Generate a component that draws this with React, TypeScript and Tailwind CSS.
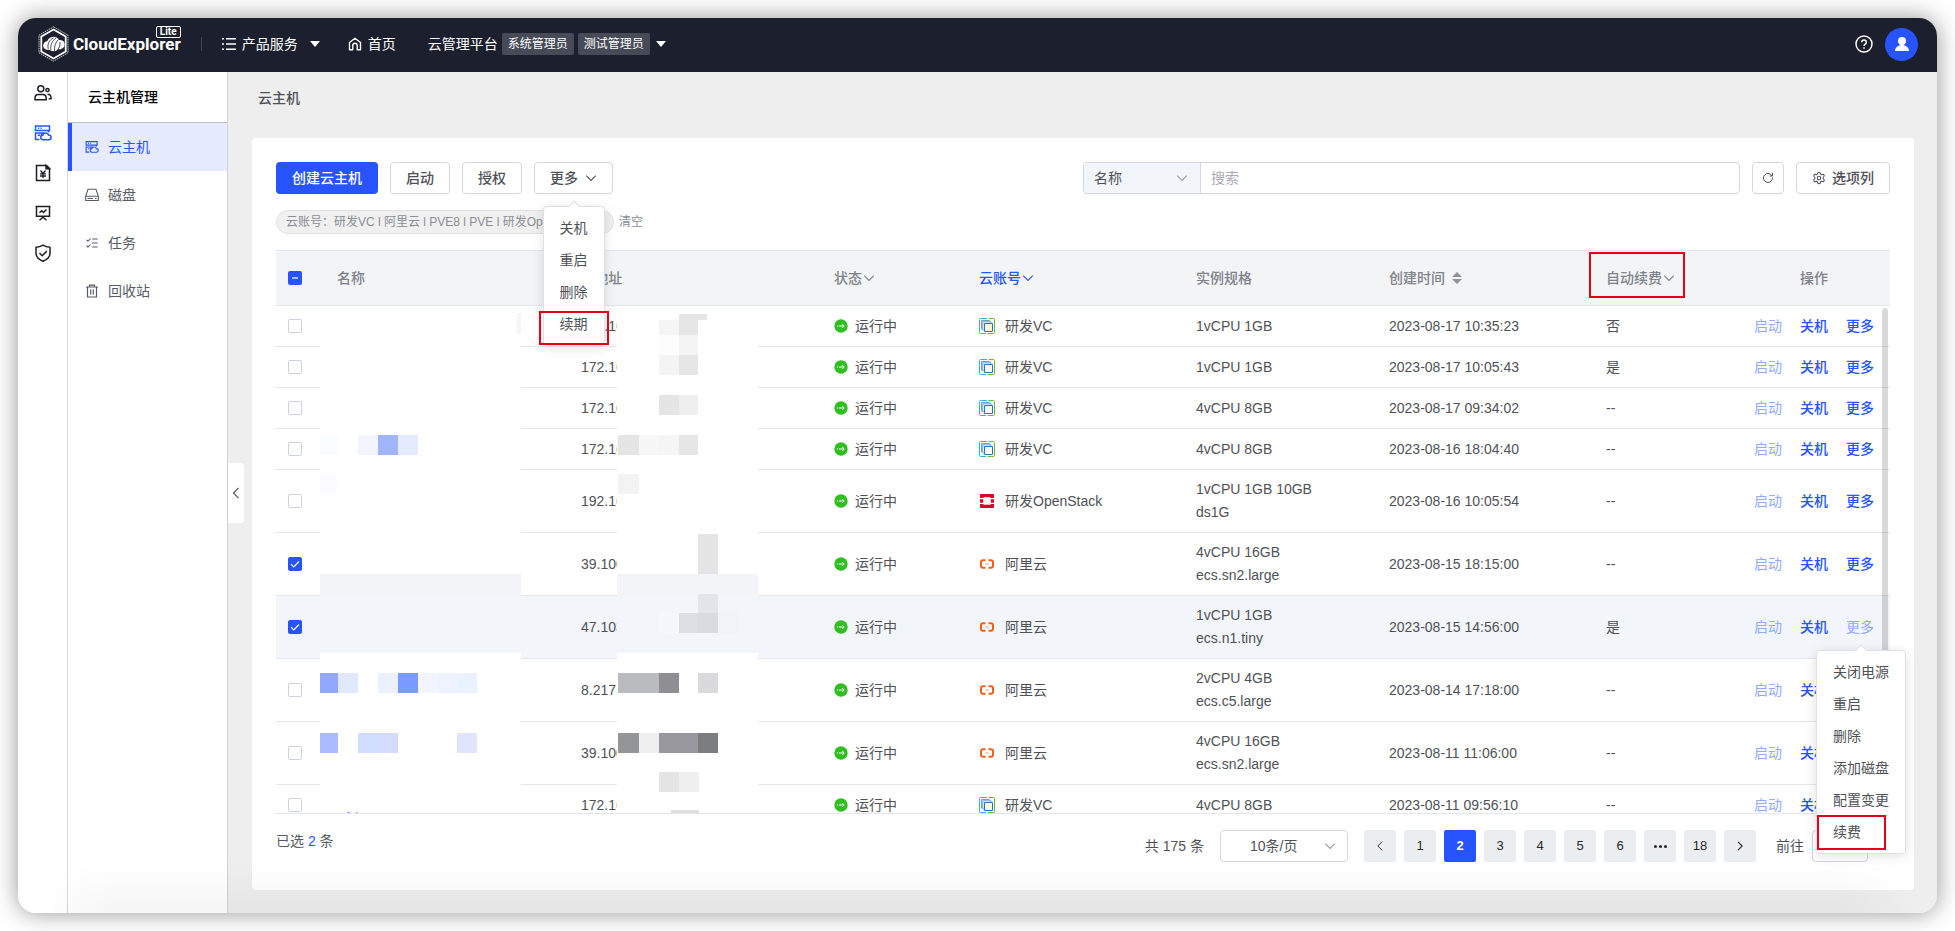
import React, { useState } from "react";
import { ListChecks, RotateCw, Settings } from "lucide-react";

type Platform = "vc" | "openstack" | "aliyun";

interface CloudServer {
  id: number;
  ip: string;
  platform: Platform;
  account: string;
  spec: string[];
  createdAt: string;
  autoRenew: string;
  hovered?: boolean;
}

interface Block {
  x: number;
  y: number;
  w: number;
  h: number;
  fill: string;
}

const servers: CloudServer[] = [
  { id: 1, ip: "172.16", platform: "vc", account: "研发VC", spec: ["1vCPU 1GB"], createdAt: "2023-08-17 10:35:23", autoRenew: "否" },
  { id: 2, ip: "172.16", platform: "vc", account: "研发VC", spec: ["1vCPU 1GB"], createdAt: "2023-08-17 10:05:43", autoRenew: "是" },
  { id: 3, ip: "172.16", platform: "vc", account: "研发VC", spec: ["4vCPU 8GB"], createdAt: "2023-08-17 09:34:02", autoRenew: "--" },
  { id: 4, ip: "172.16", platform: "vc", account: "研发VC", spec: ["4vCPU 8GB"], createdAt: "2023-08-16 18:04:40", autoRenew: "--" },
  { id: 5, ip: "192.16", platform: "openstack", account: "研发OpenStack", spec: ["1vCPU 1GB 10GB", "ds1G"], createdAt: "2023-08-16 10:05:54", autoRenew: "--" },
  { id: 6, ip: "39.100", platform: "aliyun", account: "阿里云", spec: ["4vCPU 16GB", "ecs.sn2.large"], createdAt: "2023-08-15 18:15:00", autoRenew: "--" },
  { id: 7, ip: "47.103", platform: "aliyun", account: "阿里云", spec: ["1vCPU 1GB", "ecs.n1.tiny"], createdAt: "2023-08-15 14:56:00", autoRenew: "是", hovered: true },
  { id: 8, ip: "8.217", platform: "aliyun", account: "阿里云", spec: ["2vCPU 4GB", "ecs.c5.large"], createdAt: "2023-08-14 17:18:00", autoRenew: "--" },
  { id: 9, ip: "39.100", platform: "aliyun", account: "阿里云", spec: ["4vCPU 16GB", "ecs.sn2.large"], createdAt: "2023-08-11 11:06:00", autoRenew: "--" },
  { id: 10, ip: "172.16", platform: "vc", account: "研发VC", spec: ["4vCPU 8GB"], createdAt: "2023-08-11 09:56:10", autoRenew: "--" },
];

// mosaic over the name column
const nameBlocks: Block[] = [
  { x: 0, y: 0, w: 201, h: 268, fill: "#ffffff" },
  { x: 0, y: 268, w: 201, h: 21, fill: "#f3f4f8" },
  { x: 0, y: 289, w: 201, h: 58, fill: "#f2f5fa" },
  { x: 0, y: 347, w: 201, h: 160, fill: "#ffffff" },
  { x: 197, y: 7, w: 4, h: 21, fill: "#f5f5f5" },
  { x: 0, y: 129, w: 18, h: 20, fill: "#f9fdff" },
  { x: 38, y: 129, w: 20, h: 20, fill: "#f2f5ff" },
  { x: 58, y: 129, w: 20, h: 20, fill: "#a1b4ff" },
  { x: 78, y: 129, w: 20, h: 20, fill: "#e4eaff" },
  { x: 0, y: 168, w: 18, h: 20, fill: "#fcfcff" },
  { x: 0, y: 367, w: 18, h: 20, fill: "#92a8ff" },
  { x: 18, y: 367, w: 20, h: 20, fill: "#e1e9ff" },
  { x: 58, y: 367, w: 20, h: 20, fill: "#ecf0ff" },
  { x: 78, y: 367, w: 20, h: 20, fill: "#799bff" },
  { x: 98, y: 367, w: 20, h: 20, fill: "#f2f4ff" },
  { x: 118, y: 367, w: 20, h: 20, fill: "#eef3ff" },
  { x: 138, y: 367, w: 19, h: 20, fill: "#eaf1ff" },
  { x: 0, y: 427, w: 18, h: 20, fill: "#aabcff" },
  { x: 38, y: 427, w: 20, h: 20, fill: "#d0ddff" },
  { x: 58, y: 427, w: 20, h: 20, fill: "#d3dbff" },
  { x: 137, y: 427, w: 20, h: 20, fill: "#e0e4ff" },
  { x: 27, y: 506, w: 3, h: 1, fill: "#8fb0ff" },
  { x: 36, y: 506, w: 2, h: 1, fill: "#8fb0ff" },
];

// mosaic over the tail of the address column
const ipBlocks: Block[] = [
  { x: 0, y: 0, w: 141, h: 268, fill: "#ffffff" },
  { x: 0, y: 268, w: 141, h: 21, fill: "#f3f4f8" },
  { x: 0, y: 289, w: 141, h: 58, fill: "#f2f5fa" },
  { x: 0, y: 347, w: 141, h: 160, fill: "#ffffff" },
  { x: 62, y: 8, w: 28, h: 6, fill: "#e5e5e5" },
  { x: 42, y: 14, w: 20, h: 15, fill: "#f5f5f5" },
  { x: 62, y: 14, w: 19, h: 15, fill: "#e6e6e6" },
  { x: 42, y: 29, w: 20, h: 20, fill: "#fdfdfd" },
  { x: 62, y: 29, w: 19, h: 20, fill: "#f4f4f4" },
  { x: 42, y: 49, w: 20, h: 20, fill: "#f4f4f4" },
  { x: 62, y: 49, w: 19, h: 20, fill: "#e6e6e6" },
  { x: 42, y: 89, w: 20, h: 20, fill: "#e5e5e5" },
  { x: 62, y: 89, w: 19, h: 20, fill: "#efefef" },
  { x: 1, y: 129, w: 21, h: 20, fill: "#e5e5e5" },
  { x: 22, y: 129, w: 20, h: 20, fill: "#f7f7f7" },
  { x: 42, y: 129, w: 20, h: 20, fill: "#f5f5f5" },
  { x: 62, y: 129, w: 19, h: 20, fill: "#e6e6e6" },
  { x: 1, y: 168, w: 21, h: 20, fill: "#f3f3f3" },
  { x: 81, y: 228, w: 20, h: 40, fill: "#e5e5e5" },
  { x: 81, y: 288, w: 20, h: 19, fill: "#e2e5e9" },
  { x: 42, y: 307, w: 20, h: 20, fill: "#f4f7fb" },
  { x: 62, y: 307, w: 19, h: 20, fill: "#dde0e3" },
  { x: 81, y: 307, w: 20, h: 20, fill: "#dadbe0" },
  { x: 101, y: 307, w: 20, h: 20, fill: "#f0f3f8" },
  { x: 1, y: 367, w: 41, h: 20, fill: "#babbbe" },
  { x: 42, y: 367, w: 20, h: 20, fill: "#8e8e93" },
  { x: 81, y: 367, w: 20, h: 20, fill: "#dadadc" },
  { x: 1, y: 427, w: 21, h: 20, fill: "#949597" },
  { x: 22, y: 427, w: 20, h: 20, fill: "#efefef" },
  { x: 42, y: 427, w: 39, h: 20, fill: "#9a989f" },
  { x: 81, y: 427, w: 20, h: 20, fill: "#7c7d7f" },
  { x: 42, y: 466, w: 20, h: 20, fill: "#e4e4e4" },
  { x: 62, y: 466, w: 20, h: 20, fill: "#f0f0f0" },
  { x: 54, y: 504, w: 28, h: 3, fill: "#dedede" },
];

const pages = ["1", "2", "3", "4", "5", "6", "•••", "18"];

function Mosaic({ blocks, className }: { blocks: Block[]; className: string }) {
  return (
    <svg className={className} shapeRendering="crispEdges" aria-hidden="true">
      {blocks.map((b, i) => (
        <rect key={i} x={b.x} y={b.y} width={b.w} height={b.h} fill={b.fill} />
      ))}
    </svg>
  );
}

function ChevronDown({ className = "size-3" }: { className?: string }) {
  return (
    <svg className={className} viewBox="0 0 12 12" fill="none" stroke="currentColor" strokeWidth="1.1" aria-hidden="true">
      <path d="M1.2 3.6 6 8.4l4.8-4.8" />
    </svg>
  );
}

function ChevronSide({ right, className = "size-3" }: { right?: boolean; className?: string }) {
  return (
    <svg className={className} viewBox="0 0 12 12" fill="none" stroke="currentColor" strokeWidth="1.1" aria-hidden="true">
      <path d={right ? "M4 1.8 8.2 6 4 10.2" : "M8.500 .8 3.500 6l5 5.200"} />
    </svg>
  );
}

function Caret() {
  return (
    <svg className="h-[6px] w-[10px]" viewBox="0 0 10 6" fill="currentColor" aria-hidden="true">
      <path d="M0 0h10L5 6z" />
    </svg>
  );
}

function Logo() {
  return (
    <svg className="h-[36px] w-[31px]" viewBox="0 0 31 36" fill="none" aria-hidden="true">
      <path d="M15.500.8 30 9.200v17.600l-14.500 8.400L1 26.800V9.200z" stroke="#fff" strokeWidth=".8" strokeDasharray="1.500 .8" />
      <path d="M15.500 3.500 27.700 10.500v15L15.500 32.500 3.300 25.500v-15z" stroke="#fff" strokeWidth="1.800" />
      <circle cx="9.500" cy="19.500" r="4.300" fill="#fff" />
      <circle cx="22" cy="18.500" r="4.600" fill="#fff" />
      <path d="M8 20h15v3.200H8z" fill="#fff" />
      <ellipse cx="15.500" cy="18" rx="6.800" ry="7.300" fill="#fff" />
      <path d="M10.300 22.800c-1.200-4.500.7-8.800 5.200-11M13 24.300c-1-5 1-9.500 5-12.300M16.500 24.800c-.3-4.500 1-8.500 4-11.300M19.300 24c2.200-2.200 3-5 2.600-8" stroke="#1c1f2e" strokeWidth=".8" />
    </svg>
  );
}

function ServerIcon({ className }: { className: string }) {
  return (
    <svg className={className} viewBox="0 0 18 18" fill="none" stroke="currentColor" strokeWidth="1.500" aria-hidden="true">
      <path d="M1.500 2h14v4.500h-14z" />
      <path d="M4 4.250h1.200M6.500 4.250h1.200" />
      <path d="M14.500 6.500v2M5.500 15.500h-4V9h7.500L6.800 11.500M3.800 11.200H6" />
      <path d="M9 15.700a2.200 2.200 0 0 1-.2-4.400 3 3 0 0 1 5.800-.2 2.300 2.300 0 0 1 .3 4.600z" />
    </svg>
  );
}

function UsersIcon() {
  return (
    <svg className="size-[18px]" viewBox="0 0 18 18" fill="none" stroke="currentColor" strokeWidth="1.500" aria-hidden="true">
      <circle cx="6.800" cy="4.800" r="3" />
      <path d="M1 15.700v-1.500c0-2.300 1.500-3.700 3.500-3.700h4.200c2 0 3.500 1.400 3.500 3.700v1.500z" />
      <circle cx="13.500" cy="6" r="1.600" />
      <path d="M13.500 10.300c2 0 3.500 1.300 3.500 3.200v1.300h-2.300" />
    </svg>
  );
}

function BillIcon() {
  return (
    <svg className="size-[18px]" viewBox="0 0 18 18" fill="none" stroke="currentColor" strokeWidth="1.500" aria-hidden="true">
      <path d="M2.500 1.500h10l3 3v12h-13z" />
      <path d="M12 1.500v3.300h3.500z" fill="currentColor" />
      <path d="m6.500 6.500 2.500 3 2.500-3M6 9.800h6M6 12h6M9 9.500v4.500" strokeWidth="1.300" />
    </svg>
  );
}

function BoardIcon() {
  return (
    <svg className="size-[18px]" viewBox="0 0 18 18" fill="none" stroke="currentColor" strokeWidth="1.500" aria-hidden="true">
      <path d="M1.500 2.500h15M2.500 2.500v9.800h13V2.500M9 12.300v2M5.500 16.300l3.500-3 3.500 3" />
      <path d="m5.500 8.800 2.200-2 1.800 1.700 3-3" />
    </svg>
  );
}

function ShieldIcon() {
  return (
    <svg className="size-[18px]" viewBox="0 0 18 18" fill="none" stroke="currentColor" strokeWidth="1.500" strokeLinejoin="round" aria-hidden="true">
      <path d="M9 1.200c2 1.300 4.300 2 7 2v6c0 3.600-2.800 6.300-7 8-4.200-1.700-7-4.400-7-8v-6c2.700 0 5-.7 7-2z" />
      <path d="m5.500 9 2.700 2.700 4.600-4.600" />
    </svg>
  );
}

function DiskIcon({ className }: { className: string }) {
  return (
    <svg className={className} viewBox="0 0 14 14" fill="none" stroke="currentColor" strokeWidth="1.100" aria-hidden="true">
      <path d="M3 1.300h8L13.300 8v4.500H.7V8zM.7 8.300h12.600M2.500 10.500h5.500M10 10.500h1.500" />
    </svg>
  );
}

function TrashIcon({ className }: { className: string }) {
  return (
    <svg className={className} viewBox="0 0 14 14" fill="none" stroke="currentColor" strokeWidth="1.200" aria-hidden="true">
      <path d="M1 3h12M4.500 2.800V1.200h5v1.600M2.500 3v10h9V3M5.700 5.500v5M8.300 5.500v5" />
    </svg>
  );
}

function PlatformIcon({ platform }: { platform: Platform }) {
  if (platform === "openstack") {
    return (
      <svg className="size-4" viewBox="0 0 16 16" aria-hidden="true">
        <path d="M2 1h12a1 1 0 0 1 1 1v3h-3.500V4.200h-7V5H1V2a1 1 0 0 1 1-1zM1 6.200h3.200v3.600H1zM11.800 6.200H15v3.600h-3.200zM1 11h3.500v.8h7V11H15v3a1 1 0 0 1-1 1H2a1 1 0 0 1-1-1z" fill="#cf0a2c" />
      </svg>
    );
  }
  if (platform === "aliyun") {
    return (
      <svg className="size-4" viewBox="0 0 16 16" fill="none" aria-hidden="true">
        <path d="M6.500 4.200H4A2 2 0 0 0 2 6.200v3.600a2 2 0 0 0 2 2h2.500M9.500 4.200H12a2 2 0 0 1 2 2v3.600a2 2 0 0 1-2 2H9.500" stroke="#f2601c" strokeWidth="2" />
        <path d="M6 8h4" stroke="#f9c3a9" strokeWidth="1.500" />
      </svg>
    );
  }
  return (
    <svg className="size-4" viewBox="0 0 16 16" fill="none" aria-hidden="true">
      <path d="M8 .5H1.500a1 1 0 0 0-1 1v13a1 1 0 0 0 1 1H7" stroke="#35b0d8" />
      <path d="M9.500 .5h5a1 1 0 0 1 1 1v13a1 1 0 0 1-1 1H8.500" stroke="#74b62e" />
      <path d="M10.500 3.500v-1h-8v8.500h1M12 5V3.800H3.800V12h1" stroke="#5fa3dc" />
      <path d="M5.500 5.500h8v8h-8z" stroke="#1a78c8" fill="#fff" />
    </svg>
  );
}

function Check({ checked, label, onChange }: { checked: boolean; label: string; onChange: () => void }) {
  return (
    <label className="relative block size-[14px]">
      <input
        type="checkbox"
        aria-label={label}
        checked={checked}
        onChange={onChange}
        className="block size-[14px] appearance-none rounded-xs border border-[#cfd1de] bg-white checked:border-[#2754ff] checked:bg-[#2754ff]"
      />
      {checked && (
        <svg className="pointer-events-none absolute inset-0 size-[14px]" viewBox="0 0 14 14" fill="none" stroke="#fff" strokeWidth="1.200">
          <path d="m3 7.200 2.800 2.800L11 4.500" />
        </svg>
      )}
    </label>
  );
}

function DropdownMenu({ items }: { items: string[] }) {
  return (
    <div className="relative rounded border border-[#dfe1ea] bg-white py-[5px] shadow-[0_2px_12px_rgba(0,0,0,0.12)]">
      <span className="absolute -top-[5px] left-1/2 size-2 -translate-x-1/2 rotate-45 border-t border-l border-[#dfe1ea] bg-white" />
      <ul>
        {items.map((item) => (
          <li key={item}>
            <button type="button" className="block h-8 w-full px-4 text-left text-sm whitespace-nowrap text-[#4f5157]">
              {item}
            </button>
          </li>
        ))}
      </ul>
    </div>
  );
}

const menus = [
  { label: "云主机", icon: <ServerIcon className="size-[14px]" />, active: true },
  { label: "磁盘", icon: <DiskIcon className="size-[14px]" /> },
  { label: "任务", icon: <ListChecks className="size-[14px]" strokeWidth={1.800} /> },
  { label: "回收站", icon: <TrashIcon className="size-[14px]" /> },
];

export default function App() {
  const [selected, setSelected] = useState<number[]>([6, 7]);
  const [page, setPage] = useState("2");
  const [keyword, setKeyword] = useState("");

  const toggle = (id: number) => {
    setSelected((prev) => (prev.includes(id) ? prev.filter((v) => v !== id) : [...prev, id]));
  };

  return (
    <div className="h-screen min-h-[600px] bg-white p-[18px] font-['Liberation_Sans','Noto_Sans_CJK_SC',sans-serif] text-sm text-[#4f5157]">
      <div className="relative flex h-full flex-col overflow-hidden rounded-[18px] shadow-[0_0_24px_rgba(0,0,0,0.42)]">
        <header className="flex h-[54px] shrink-0 items-center bg-[#1c1f2e] pr-[19px] pb-[2px] pl-5 text-white">
          <a href="#" className="relative flex items-center gap-1" aria-label="CloudExplorer Lite">
            <Logo />
            <span className="font-[Roboto,sans-serif] text-[17px] font-bold">CloudExplorer</span>
            <span className="absolute top-0 right-0 rounded-xs border border-white px-[3px] font-[Roboto,sans-serif] text-[10px] leading-[10px] font-bold">Lite</span>
          </a>
          <span className="mr-5 ml-5 h-[14px] w-px bg-[#42454f]" />
          <button type="button" className="flex items-center gap-[6px]">
            <svg className="size-[14px]" viewBox="0 0 14 14" fill="none" stroke="currentColor" strokeWidth="1.400" aria-hidden="true">
              <path d="M4 1.700h10M4 7h10M4 12.300h10M0 1.700h2M0 7h2M0 12.300h2" />
            </svg>
            产品服务
            <span className="ml-[6px]"><Caret /></span>
          </button>
          <a href="#" className="ml-7 flex items-center gap-[6px]">
            <svg className="size-[14px]" viewBox="0 0 14 14" fill="none" stroke="currentColor" strokeWidth="1.400" aria-hidden="true">
              <path d="M1.500 5.500 7 1.200l5.500 4.300v7.300H9.200V8.500a2.200 2.200 0 0 0-4.400 0v4.300H1.500z" strokeLinejoin="round" />
            </svg>
            首页
          </a>
          <button type="button" className="ml-8 flex items-center gap-1">
            云管理平台
            <span className="rounded-xs bg-[#474a57] px-[6px] text-xs leading-[22px]">系统管理员</span>
            <span className="rounded-xs bg-[#474a57] px-[6px] text-xs leading-[22px]">测试管理员</span>
            <span className="ml-[2px]"><Caret /></span>
          </button>
          <div className="ml-auto flex items-center gap-3">
            <button type="button" aria-label="帮助">
              <svg className="size-[18px]" viewBox="0 0 18 18" fill="none" stroke="currentColor" strokeWidth="1.500" aria-hidden="true">
                <circle cx="9" cy="9" r="8" />
                <path d="M6.700 7.200a2.300 2.300 0 1 1 3.500 2c-.8.500-1.200.900-1.200 1.800M9 12.200v1.500" />
              </svg>
            </button>
            <button type="button" aria-label="用户" className="flex size-[33px] items-center justify-center rounded-full bg-[#2754ff]">
              <svg className="size-[14px]" viewBox="0 0 14 14" fill="currentColor" aria-hidden="true">
                <circle cx="7" cy="4" r="4" />
                <path d="M5.300 6h3.400v2.200c3 .6 5.300 2.700 5.300 5.800H0c0-3.100 2.300-5.200 5.300-5.800z" />
              </svg>
            </button>
          </div>
        </header>

        <div className="flex min-h-0 flex-1">
          <nav className="flex w-[50px] shrink-0 flex-col items-center gap-[22px] border-r border-[#d5d7de] bg-white pt-3 text-[#1d1f24]">
            <a href="#" aria-label="用户管理"><UsersIcon /></a>
            <a href="#" aria-label="云主机管理" className="text-[#2754ff]"><ServerIcon className="size-[18px]" /></a>
            <a href="#" aria-label="云账单"><BillIcon /></a>
            <a href="#" aria-label="运营分析"><BoardIcon /></a>
            <a href="#" aria-label="安全合规"><ShieldIcon /></a>
          </nav>

          <aside className="w-40 shrink-0 border-r border-[#cfd2de] bg-white">
            <h2 className="flex h-[51px] items-center border-b border-[#bcbec4] pl-5 font-medium text-black">云主机管理</h2>
            {menus.map((m) => (
              <a
                key={m.label}
                href="#"
                className={`flex h-12 items-center gap-[9px] border-l-4 pl-[13px] ${
                  m.active ? "border-[#2754ff] bg-[#e6ebff] text-[#2754ff]" : "border-transparent text-[#565b66]"
                }`}
              >
                {m.icon}
                {m.label}
              </a>
            ))}
          </aside>

          <main className="relative flex min-w-0 flex-1 flex-col bg-[#eeeeee] pr-[23px] pb-[23px] pl-6">
            <button
              type="button"
              aria-label="收起菜单"
              className="absolute top-1/2 left-0 flex h-[60px] w-4 -translate-y-1/2 items-center justify-center rounded-r bg-white"
            >
              <ChevronSide />
            </button>
            <h1 className="mb-[14px] flex h-[52px] shrink-0 items-center pl-[6px] font-medium">云主机</h1>

            <section className="flex min-h-0 flex-1 flex-col rounded bg-white px-6 pt-6 pb-7">
              <div className="flex shrink-0 items-center justify-between">
                <div className="flex gap-3 font-medium">
                  <button type="button" className="h-8 rounded bg-[#2754ff] px-4 text-white">创建云主机</button>
                  <button type="button" className="h-8 rounded border border-[#d3d5e0] px-[15px]">启动</button>
                  <button type="button" className="h-8 rounded border border-[#d3d5e0] px-[15px]">授权</button>
                  <div className="relative">
                    <button type="button" className="flex h-8 items-center gap-[7px] rounded border border-[#d3d5e0] px-[15px]">
                      更多
                      <ChevronDown />
                    </button>
                    <div className="absolute top-11 left-1/2 z-20 -translate-x-1/2 font-normal">
                      <DropdownMenu items={["关机", "重启", "删除", "续期"]} />
                      <span className="pointer-events-none absolute -right-1 bottom-px -left-1 h-[34px] border-2 border-[#e60019]" />
                    </div>
                  </div>
                </div>
                <div className="flex w-1/2 gap-3">
                  <div className="flex h-8 flex-1 rounded border border-[#d3d5e0]">
                    <div className="relative w-[117px] border-r border-[#d3d5e0]">
                      <select aria-label="搜索字段" className="h-full w-full appearance-none rounded-l bg-[#f2f5fa] pl-[10px]">
                        <option>名称</option>
                      </select>
                      <ChevronDown className="pointer-events-none absolute top-[9px] right-3 size-3 text-[#9a9ca4]" />
                    </div>
                    <input
                      type="text"
                      aria-label="搜索"
                      placeholder="搜索"
                      value={keyword}
                      onChange={(e) => setKeyword(e.target.value)}
                      className="min-w-0 flex-1 rounded-r px-[10px] outline-none placeholder:text-[#a8abb2]"
                    />
                  </div>
                  <button type="button" aria-label="刷新" className="flex size-8 items-center justify-center rounded border border-[#d3d5e0]">
                    <RotateCw className="size-3" />
                  </button>
                  <button type="button" className="flex h-8 items-center gap-[6px] rounded border border-[#d3d5e0] px-[15px] font-medium">
                    <Settings className="size-[14px]" strokeWidth={1.800} />
                    选项列
                  </button>
                </div>
              </div>

              <div className="mt-4 flex h-6 shrink-0 items-center gap-[5px] text-xs text-[#8b8e95]">
                <span className="h-6 w-[338px] truncate rounded-full border border-[#e0e0e2] bg-[#f0f0f0] pl-[9px] leading-[22px]">
                  云账号：研发VC l 阿里云 l PVE8 l PVE l 研发OpenStack
                </span>
                <button type="button">清空</button>
              </div>

              <div className="relative mt-4 flex min-h-0 flex-1 flex-col">
                <div className="relative min-h-0 flex-1 overflow-hidden border-b border-[#e3e5ef]">
                  <table className="w-full table-fixed border-separate border-spacing-0 text-left">
                    <colgroup>
                      <col className="w-[49px]" />
                      <col className="w-[244px]" />
                      <col className="w-[253px]" />
                      <col className="w-[145px]" />
                      <col className="w-[217px]" />
                      <col className="w-[193px]" />
                      <col className="w-[217px]" />
                      <col className="w-[144px]" />
                      <col className="w-[152px]" />
                    </colgroup>
                    <thead>
                      <tr className="h-14 bg-[#f2f4f6] text-[#7f828a] *:border-y *:border-[#e3e5ef] *:px-3 *:font-medium">
                        <th>
                          <span className="flex size-[14px] items-center justify-center rounded-xs bg-[#2754ff]" role="checkbox" aria-checked="mixed" aria-label="全选">
                            <span className="h-[2px] w-[6px] bg-[#a9bbff]" />
                          </span>
                        </th>
                        <th>名称</th>
                        <th>IP地址</th>
                        <th>
                          <span className="flex items-center gap-px">状态<ChevronDown /></span>
                        </th>
                        <th>
                          <span className="flex items-center gap-px text-[#2754ff]">云账号<ChevronDown /></span>
                        </th>
                        <th>实例规格</th>
                        <th>
                          <span className="flex items-center gap-[7px]">
                            创建时间
                            <svg className="h-3 w-[10px]" viewBox="0 0 10 12" fill="#8f9299" aria-hidden="true">
                              <path d="M0 5h10L5 0zM0 7h10l-5 5z" />
                            </svg>
                          </span>
                        </th>
                        <th className="relative">
                          <span className="flex items-center gap-px">自动续费<ChevronDown /></span>
                          <span className="pointer-events-none absolute top-px -left-[5px] h-[46px] w-[96px] border-2 border-[#e60019]" />
                        </th>
                        <th className="text-center">操作</th>
                      </tr>
                    </thead>
                    <tbody>
                      {servers.map((s) => (
                        <tr
                          key={s.id}
                          className={`h-[41px] leading-[23px] *:border-b *:border-[#e3e5ef] *:px-3 *:py-2 ${s.hovered ? "bg-[#f2f5fa]" : ""}`}
                        >
                          <td><Check checked={selected.includes(s.id)} label={`选择 ${s.id}`} onChange={() => toggle(s.id)} /></td>
                          <td></td>
                          <td>{s.ip}</td>
                          <td>
                            <span className="flex items-center gap-[7px]">
                              <svg className="size-[14px]" viewBox="0 0 14 14" fill="none" aria-hidden="true">
                                <circle cx="7" cy="7" r="6.700" fill="#2fbf1f" />
                                <path d="M3 7h1M5 7h5M8.200 5l2 2-2 2" stroke="#fff" />
                              </svg>
                              运行中
                            </span>
                          </td>
                          <td>
                            <span className="flex items-center gap-[10px]">
                              <PlatformIcon platform={s.platform} />
                              {s.account}
                            </span>
                          </td>
                          <td>
                            {s.spec.map((line) => (
                              <div key={line}>{line}</div>
                            ))}
                          </td>
                          <td>{s.createdAt}</td>
                          <td>{s.autoRenew}</td>
                          <td>
                            <div className="flex gap-[18px] pl-1 font-medium whitespace-nowrap text-[#2754ff]">
                              <button type="button" disabled className="font-normal text-[#93a9ff]">启动</button>
                              <button type="button">关机</button>
                              <button type="button" className={s.hovered ? "font-normal text-[#93a9ff]" : ""}>更多</button>
                            </div>
                          </td>
                        </tr>
                      ))}
                    </tbody>
                  </table>
                  <Mosaic blocks={nameBlocks} className="absolute top-14 left-11 h-[507px] w-[201px]" />
                  <Mosaic blocks={ipBlocks} className="absolute top-14 left-[341px] h-[507px] w-[141px]" />
                  <span className="absolute top-[58px] right-[2px] h-[420px] w-[6px] rounded-full bg-black/15" />
                </div>
                <div className="absolute top-[400px] -right-4 z-20">
                  <DropdownMenu items={["关闭电源", "重启", "删除", "添加磁盘", "配置变更", "续费"]} />
                  <span className="pointer-events-none absolute bottom-1 left-px h-[35px] w-[69px] border-2 border-[#e60019]" />
                </div>
              </div>

              <div className="mt-4 flex shrink-0 items-start justify-between">
                <p className="leading-[22px] text-[#565b66]">
                  已选 <span className="text-[#2754ff]">{selected.length}</span> 条
                </p>
                <div className="flex items-center">
                  <span>共 175 条</span>
                  <div className="relative ml-4">
                    <select aria-label="每页条数" className="h-8 w-32 appearance-none rounded border border-[#d3d5e0] bg-white pl-[29px]">
                      <option>10条/页</option>
                    </select>
                    <ChevronDown className="pointer-events-none absolute top-[10px] right-3 size-3 text-[#9a9ca4]" />
                  </div>
                  <div className="ml-4 flex gap-2 text-[13px] text-[#26282d]">
                    <button type="button" aria-label="上一页" className="flex size-8 items-center justify-center rounded-xs bg-[#ebeef1]">
                      <ChevronSide className="size-[10px]" />
                    </button>
                    {pages.map((p) => (
                      <button
                        key={p}
                        type="button"
                        onClick={() => setPage(p)}
                        className={`size-8 rounded-xs ${p === page ? "bg-[#2754ff] font-bold text-white" : "bg-[#ebeef1]"}`}
                      >
                        {p === "•••" ? (
                          <svg className="mx-auto h-[3px] w-[13px]" viewBox="0 0 13 3" fill="currentColor" aria-label="更多页">
                            <circle cx="1.500" cy="1.500" r="1.500" />
                            <circle cx="6.500" cy="1.500" r="1.500" />
                            <circle cx="11.500" cy="1.500" r="1.500" />
                          </svg>
                        ) : (
                          p
                        )}
                      </button>
                    ))}
                    <button type="button" aria-label="下一页" className="flex size-8 items-center justify-center rounded-xs bg-[#ebeef1]">
                      <ChevronSide right />
                    </button>
                  </div>
                  <label className="ml-5 flex items-center gap-2">
                    前往
                    <input type="text" className="h-8 w-14 rounded border border-[#d3d5e0] text-center" />
                    页
                  </label>
                </div>
              </div>
            </section>
          </main>
        </div>
        {/* soft shade along the bottom edge */}
        <div className="pointer-events-none absolute right-[60px] -bottom-px left-[60px] h-px shadow-[0_0_48px_6px_rgba(0,0,0,0.16)]" />
      </div>
    </div>
  );
}
